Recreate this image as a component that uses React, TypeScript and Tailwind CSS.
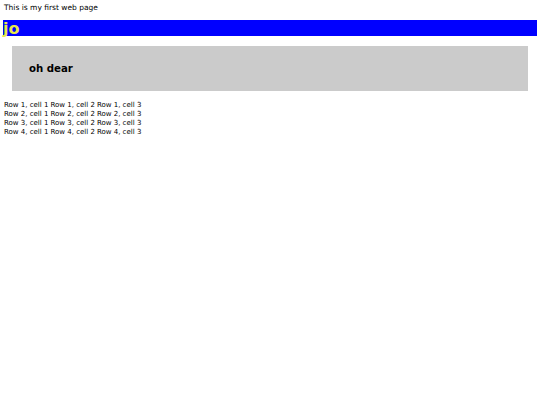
export default function App() {
  const rows = [1, 2, 3, 4];
  return (
    <div className="min-h-[405px] bg-white text-black [font-family:'DejaVu_Sans',Verdana,sans-serif]">
      <div className="px-1 pt-[3px]">
        <p className="text-[7.5px] leading-[10px]">This is my first web page</p>
        <h1 className="mx-[-1px] mt-[7px] h-[16px] bg-[#0000ff] text-[16px] font-bold leading-[17px] text-[#e8e84a]">
          jo
        </h1>
      </div>
      <div className="mx-3 mt-[10px] flex h-[45px] items-center bg-[#cbcbcb] pl-[17px]">
        <h2 className="text-[10.2px] font-bold">oh dear</h2>
      </div>
      <table className="mt-[10px] ml-[3px] text-[7px] leading-[9px]">
        <tbody>
          {rows.map((r) => (
            <tr key={r}>
              <td className="pl-[1px]">Row {r}, cell 1</td>
              <td className="pl-[2px]">Row {r}, cell 2</td>
              <td className="pl-[2px]">Row {r}, cell 3</td>
            </tr>
          ))}
        </tbody>
      </table>
    </div>
  );
}
